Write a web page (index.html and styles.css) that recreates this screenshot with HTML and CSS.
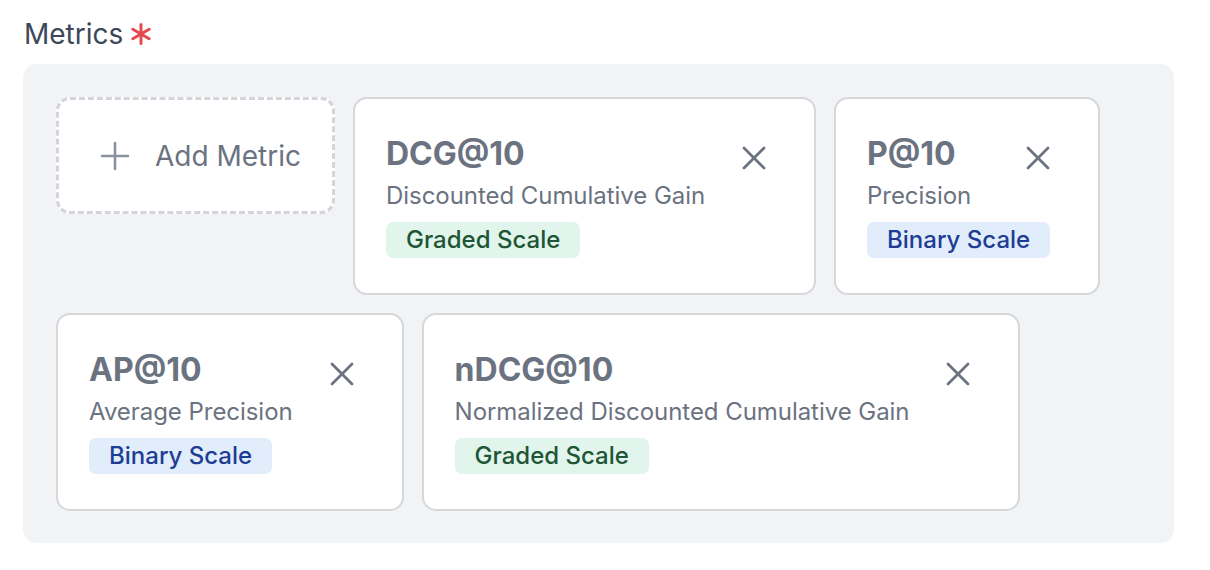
FILE: index.html
```html
<!DOCTYPE html>
<html lang="en">
<head>
<meta charset="utf-8">
<title>Metrics</title>
<link rel="stylesheet" href="styles.css">
</head>
<body>
<div class="page">
  <div class="label">
    <span>Metrics</span>
    <svg class="req" viewBox="0 0 22 22" width="22" height="22" aria-hidden="true">
      <g stroke="#e5484d" stroke-width="3" stroke-linecap="round">
        <line x1="11" y1="1.5" x2="11" y2="20.5"/>
        <line x1="2.8" y1="6.3" x2="19.2" y2="15.7"/>
        <line x1="2.8" y1="15.7" x2="19.2" y2="6.3"/>
      </g>
    </svg>
  </div>
  <div class="panel">
    <button class="add-card" type="button">
      <svg class="plus" viewBox="0 0 32 32" width="32" height="32" aria-hidden="true">
        <g stroke="#8b929e" stroke-width="2.6" stroke-linecap="round">
          <line x1="16" y1="3" x2="16" y2="29"/>
          <line x1="3" y1="16" x2="29" y2="16"/>
        </g>
      </svg>
      <span>Add Metric</span>
    </button>

    <div class="card">
      <div class="title">DCG@10</div>
      <div class="desc">Discounted Cumulative Gain</div>
      <span class="badge graded">Graded Scale</span>
      <svg class="close" viewBox="0 0 24 24" width="24" height="24" aria-hidden="true"><path d="M2 2L22 22M22 2L2 22"/></svg>
    </div>

    <div class="card">
      <div class="title">P@10</div>
      <div class="desc">Precision</div>
      <span class="badge binary">Binary Scale</span>
      <svg class="close" viewBox="0 0 24 24" width="24" height="24" aria-hidden="true"><path d="M2 2L22 22M22 2L2 22"/></svg>
    </div>

    <div class="card">
      <div class="title">AP@10</div>
      <div class="desc">Average Precision</div>
      <span class="badge binary">Binary Scale</span>
      <svg class="close" viewBox="0 0 24 24" width="24" height="24" aria-hidden="true"><path d="M2 2L22 22M22 2L2 22"/></svg>
    </div>

    <div class="card">
      <div class="title">nDCG@10</div>
      <div class="desc">Normalized Discounted Cumulative Gain</div>
      <span class="badge graded">Graded Scale</span>
      <svg class="close" viewBox="0 0 24 24" width="24" height="24" aria-hidden="true"><path d="M2 2L22 22M22 2L2 22"/></svg>
    </div>
  </div>
</div>
</body>
</html>
```

FILE: styles.css
```css
* { box-sizing: border-box; }

html, body {
  margin: 0;
  background: #ffffff;
  font-family: Inter, "Noto Sans", "Liberation Sans", sans-serif;
}

.page {
  padding: 14px 36px 0 23px;
}

.label {
  display: flex;
  align-items: center;
  gap: 7px;
  font-size: 28px;
  line-height: 40px;
  color: #3d4757;
  margin-bottom: 10px;
  padding-left: 1px;
}

.req { display: block; }

.panel {
  background: #f2f3f5;
  border-radius: 14px;
  padding: 33px 32px 32px 33px;
  display: flex;
  flex-wrap: wrap;
  align-items: flex-start;
  gap: 18px;
  width: 1151px;
}

.add-card {
  display: flex;
  align-items: center;
  gap: 24px;
  height: 117px;
  width: 279px;
  padding: 0 0 0 40px;
  background: #ffffff;
  border: 3px dashed #d3d5da;
  border-radius: 14px;
  font-family: inherit;
  font-size: 28px;
  color: #6b7280;
  cursor: pointer;
  white-space: nowrap;
}

.plus { display: block; flex: none; }

.card {
  position: relative;
  display: flex;
  flex-direction: column;
  align-items: flex-start;
  background: #ffffff;
  border: 2px solid #d6d8dc;
  border-radius: 14px;
  padding: 35px 48px 35px 31px;
}

.title {
  font-size: 32px;
  line-height: 40px;
  font-weight: 700;
  color: #6b7280;
}

.desc {
  margin-top: 4px;
  font-size: 24px;
  line-height: 36px;
  color: #6b7280;
  padding-right: 61px;
  white-space: nowrap;
  letter-spacing: -0.05px;
}

.badge {
  margin-top: 8px;
  font-size: 24px;
  line-height: 28px;
  padding: 4px 20px;
  border-radius: 7px;
  font-weight: 500;
}

.graded {
  background: #e1f5ec;
  color: #1d5535;
}

.binary {
  background: #e1edfa;
  color: #1f3c94;
}

.close {
  position: absolute;
  top: 47px;
  right: 48px;
  fill: none;
  stroke: #6b7280;
  stroke-width: 2.8;
  stroke-linecap: round;
}
```
